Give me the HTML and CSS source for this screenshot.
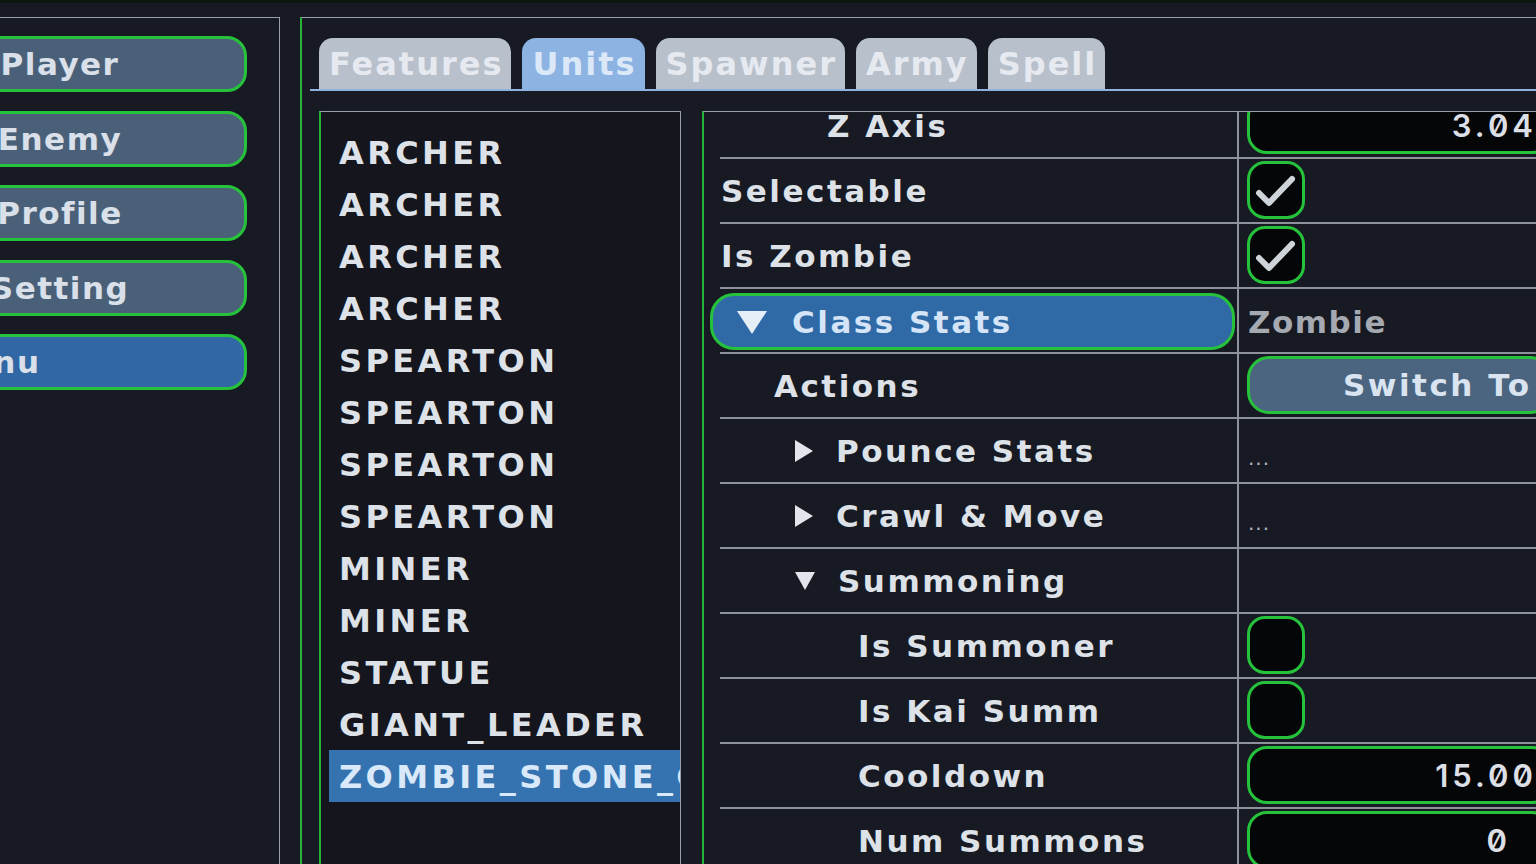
FILE: index.html
```html
<!DOCTYPE html>
<html lang="en">
<head>
    <meta charset="UTF-8">
    <meta name="viewport" content="width=device-width, initial-scale=1.0">
    <title>Unit Editor</title>
    <link rel="stylesheet" href="styles.css">
</head>
<body>
    <div class="topbar"></div>
    <div class="app">
        <aside class="sidebar">
            <button class="nav-btn">Player</button>
            <button class="nav-btn">Enemy</button>
            <button class="nav-btn">Profile</button>
            <button class="nav-btn">Setting</button>
            <button class="nav-btn nav-btn-menu">Menu</button>
        </aside>

        <main class="main">
            <nav class="tabs">
                <div class="tab">Features</div>
                <div class="tab active">Units</div>
                <div class="tab">Spawner</div>
                <div class="tab">Army</div>
                <div class="tab">Spell</div>
            </nav>

            <div class="workspace">
                <ul class="unit-list">
                    <li>ARCHER</li>
                    <li>ARCHER</li>
                    <li>ARCHER</li>
                    <li>ARCHER</li>
                    <li>SPEARTON</li>
                    <li>SPEARTON</li>
                    <li>SPEARTON</li>
                    <li>SPEARTON</li>
                    <li>MINER</li>
                    <li>MINER</li>
                    <li>STATUE</li>
                    <li>GIANT_LEADER</li>
                    <li class="selected">ZOMBIE_STONE_GIANT</li>
                </ul>

                <section class="inspector">
                    <div class="rows">
                        <div class="row">
                            <div class="name lv-axis">Z Axis</div>
                            <div class="value"><div class="field">3.04</div></div>
                        </div>
                        <div class="row">
                            <div class="name">Selectable</div>
                            <div class="value">
                                <div class="check">
                                    <svg viewBox="0 0 52 52" width="52" height="52"><polyline points="9,29 19,39 42,15" /></svg>
                                </div>
                            </div>
                        </div>
                        <div class="row">
                            <div class="name">Is Zombie</div>
                            <div class="value">
                                <div class="check">
                                    <svg viewBox="0 0 52 52" width="52" height="52"><polyline points="9,29 19,39 42,15" /></svg>
                                </div>
                            </div>
                        </div>
                        <div class="row">
                            <div class="name head-cell">
                                <div class="group-head">
                                    <svg class="arrow-big" viewBox="0 0 30 24" width="30" height="24"><polygon points="0,1 30,1 15,24" /></svg>
                                    <span>Class Stats</span>
                                </div>
                            </div>
                            <div class="value"><span class="value-text">Zombie</span></div>
                        </div>
                        <div class="row">
                            <div class="name lv1">Actions</div>
                            <div class="value"><button class="action-btn">Switch To</button></div>
                        </div>
                        <div class="row">
                            <div class="name lv2">
                                <svg class="arrow" viewBox="0 0 18 22" width="18" height="22"><polygon points="0,0 18,11 0,22" /></svg>
                                <span>Pounce Stats</span>
                            </div>
                            <div class="value"><span class="dots">...</span></div>
                        </div>
                        <div class="row">
                            <div class="name lv2">
                                <svg class="arrow" viewBox="0 0 18 22" width="18" height="22"><polygon points="0,0 18,11 0,22" /></svg>
                                <span>Crawl &amp; Move</span>
                            </div>
                            <div class="value"><span class="dots">...</span></div>
                        </div>
                        <div class="row">
                            <div class="name lv2">
                                <svg class="arrow" viewBox="0 0 20 18" width="20" height="18"><polygon points="0,0 20,0 10,18" /></svg>
                                <span>Summoning</span>
                            </div>
                            <div class="value"></div>
                        </div>
                        <div class="row">
                            <div class="name lv3">Is Summoner</div>
                            <div class="value"><div class="check"></div></div>
                        </div>
                        <div class="row">
                            <div class="name lv3">Is Kai Summ</div>
                            <div class="value"><div class="check"></div></div>
                        </div>
                        <div class="row">
                            <div class="name lv3">Cooldown</div>
                            <div class="value"><div class="field">15.00</div></div>
                        </div>
                        <div class="row">
                            <div class="name lv3">Num Summons</div>
                            <div class="value"><div class="field field-int">0</div></div>
                        </div>
                    </div>
                </section>
            </div>
        </main>
    </div>
</body>
</html>
```

FILE: styles.css
```css
*{
    margin: 0;
    padding: 0;
    box-sizing: border-box;
}
body{
    height: 100vh;
    overflow: hidden;
    background-color: #171923;
    color: #dde1e8;
    font-family: "DejaVu Sans", sans-serif;
    font-weight: bold;
}
.topbar{
    height: 3px;
    background-color: #0c160f;
}
.app{
    display: flex;
    gap: 20px;
    margin-top: 14px;
    height: calc(100vh - 17px);
}

/* left menu */
.sidebar{
    width: 280px;
    flex: none;
    display: flex;
    flex-direction: column;
    gap: 18.5px;
    padding: 18px 32px 0 0;
    border-top: 1px solid #9a9ea8;
    border-right: 1px solid #9a9ea8;
    overflow: hidden;
}
.nav-btn{
    width: calc(100% + 129px);
    margin-left: -129px;
    height: 56px;
    flex: none;
    padding-left: 2px;
    border: 3px solid #27c23b;
    border-radius: 20px;
    background-color: #4a6079;
    color: #d9e0ea;
    font-family: inherit;
    font-weight: bold;
    font-size: 31px;
    letter-spacing: 1.5px;
    text-align: center;
}
.nav-btn-menu{
    background-color: #3067a4;
    padding: 0 139px 0 0;
}

/* main area */
.main{
    flex: 1;
    min-width: 0;
    padding: 20px 0 0 8px;
    border-left: 2px solid #22b337;
    border-top: 1px solid #9a9ea8;
}
.tabs{
    display: flex;
    gap: 11px;
    padding-left: 9px;
    border-bottom: 2px solid #8db2df;
}
.tab{
    height: 51px;
    line-height: 53px;
    padding: 0 8px 0 10px;
    border-radius: 14px 14px 0 0;
    background-color: #b8c0cb;
    color: #e6eaf0;
    font-size: 32px;
    letter-spacing: 2px;
}
.tab.active{
    background-color: #8db3e3;
    color: #dbe8f8;
}
.workspace{
    display: flex;
    gap: 21px;
    height: 100%;
    margin: 20px 0 0 9px;
}

/* unit list */
.unit-list{
    list-style: none;
    width: 362px;
    flex: none;
    padding: 14px 0 0 8px;
    background-color: #14151d;
    border-left: 2px solid #22b337;
    border-top: 1px solid #9a9ea8;
    border-right: 1px solid #9a9ea8;
    overflow: hidden;
}
.unit-list li{
    height: 52px;
    line-height: 54px;
    padding-left: 10px;
    font-size: 32px;
    letter-spacing: 3.4px;
    white-space: nowrap;
}
.unit-list li.selected{
    background-color: #3573b0;
    color: #d9e9fa;
}

/* property inspector */
.inspector{
    width: 900px;
    flex: none;
    border-left: 2px solid #22b337;
    border-top: 1px solid #9a9ea8;
    overflow: hidden;
}
.rows{
    margin: -18px 0 0 16px;
}
.row{
    display: flex;
    height: 65px;
    border-bottom: 2px solid #8e929c;
}
.name{
    width: 517px;
    flex: none;
    display: flex;
    align-items: center;
    gap: 23px;
    padding-left: 1px;
    font-size: 31px;
    letter-spacing: 2.5px;
    white-space: nowrap;
}
.lv-axis{ padding-left: 107px; }
.lv1{ padding-left: 54px; }
.lv2{ padding-left: 75px; }
.lv3{ padding-left: 138px; }
.arrow{
    fill: #e2e5eb;
    flex: none;
}
.head-cell{
    padding-left: 0;
}
.group-head{
    flex: 1;
    height: 57px;
    margin: 2px 2px 0 -10px;
    display: flex;
    align-items: center;
    gap: 25px;
    padding-left: 24px;
    border: 3px solid #27c23b;
    border-radius: 24px;
    background-color: #2f6aa7;
    color: #d5e5f7;
}
.arrow-big{
    fill: #e6eef8;
}
.value{
    flex: 1;
    display: flex;
    align-items: flex-start;
    padding: 2px 0 0 8px;
    border-left: 2px solid #8e929c;
}
.check{
    width: 58px;
    height: 58px;
    border: 3px solid #27c23b;
    border-radius: 18px;
    background-color: #050608;
}
.check svg{
    display: block;
}
.check polyline{
    fill: none;
    stroke: #cfd3da;
    stroke-width: 6;
    stroke-linecap: round;
    stroke-linejoin: round;
}
.field{
    width: 305px;
    height: 58px;
    line-height: 54px;
    padding-right: 12px;
    text-align: right;
    border: 3px solid #27c23b;
    border-radius: 20px;
    background-color: #050608;
    color: #dcdfe5;
    font-family: Inter, sans-serif;
    font-weight: 600;
    font-size: 31px;
    font-feature-settings: "zero" 1;
    letter-spacing: 4px;
}
.field-int{
    padding-right: 38px;
}
.value-text{
    align-self: center;
    padding-left: 1px;
    color: #a5a9b1;
    font-size: 31px;
    letter-spacing: 1.5px;
}
.dots{
    align-self: center;
    padding: 12px 0 0 1px;
    color: #b0b4bc;
    font-size: 20px;
    font-weight: normal;
    letter-spacing: 1px;
}
.action-btn{
    width: 305px;
    height: 58px;
    padding-left: 93px;
    text-align: left;
    border: 3px solid #27c23b;
    border-radius: 22px;
    background-color: #4b6580;
    color: #dae4f1;
    font-family: inherit;
    font-weight: bold;
    font-size: 31px;
    letter-spacing: 2.5px;
}
```
